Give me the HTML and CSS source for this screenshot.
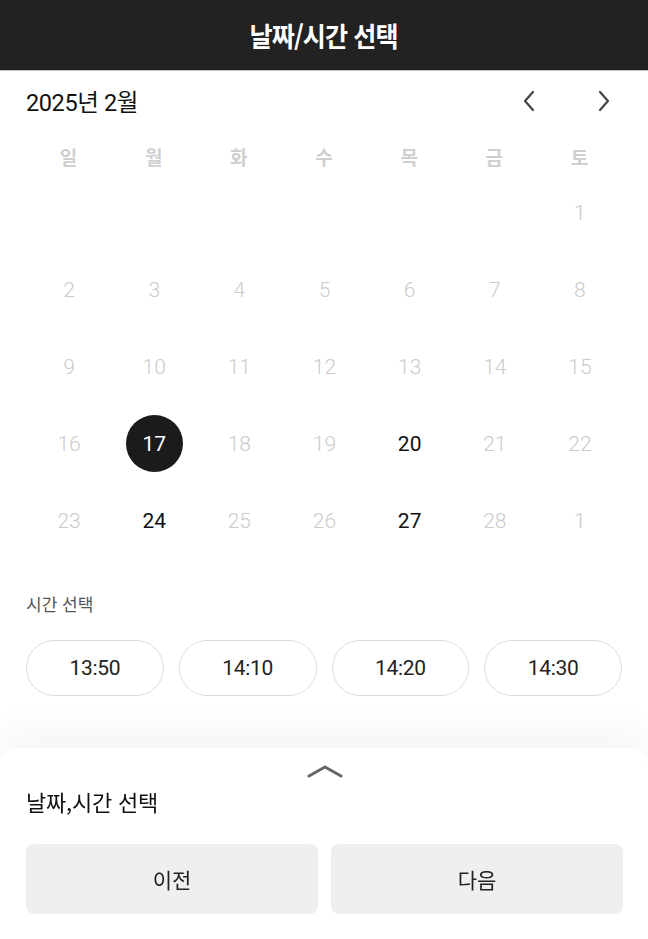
FILE: index.html
```html
<!DOCTYPE html>
<html lang="ko">
<head>
	<meta charset="utf-8">
	<meta name="viewport" content="width=device-width, initial-scale=1.0">
	<title>날짜/시간 선택</title>
	<link rel="stylesheet" href="styles.css">
</head>
<body>

	<header class="top-bar">
		<h1 class="top-title">날짜/시간 선택</h1>
	</header>

	<section class="calendar">
		<div class="month-row">
			<span class="month-label">2025년 2월</span>
			<div class="month-nav">
				<button class="nav-btn" type="button">
					<svg width="14" height="22" viewBox="0 0 14 22"><path d="M11 2 L3 11 L11 20" fill="none" stroke="#444" stroke-width="2.2" stroke-linecap="round" stroke-linejoin="round"/></svg>
				</button>
				<button class="nav-btn" type="button">
					<svg width="14" height="22" viewBox="0 0 14 22"><path d="M3 2 L11 11 L3 20" fill="none" stroke="#444" stroke-width="2.2" stroke-linecap="round" stroke-linejoin="round"/></svg>
				</button>
			</div>
		</div>

		<div class="week-row">
			<span>일</span><span>월</span><span>화</span><span>수</span><span>목</span><span>금</span><span>토</span>
		</div>

		<div class="days">
			<span class="day"></span><span class="day"></span><span class="day"></span><span class="day"></span><span class="day"></span><span class="day"></span><span class="day off">1</span>
			<span class="day off">2</span><span class="day off">3</span><span class="day off">4</span><span class="day off">5</span><span class="day off">6</span><span class="day off">7</span><span class="day off">8</span>
			<span class="day off">9</span><span class="day off">10</span><span class="day off">11</span><span class="day off">12</span><span class="day off">13</span><span class="day off">14</span><span class="day off">15</span>
			<span class="day off">16</span><span class="day selected"><i>17</i></span><span class="day off">18</span><span class="day off">19</span><span class="day">20</span><span class="day off">21</span><span class="day off">22</span>
			<span class="day off">23</span><span class="day">24</span><span class="day off">25</span><span class="day off">26</span><span class="day">27</span><span class="day off">28</span><span class="day off">1</span>
		</div>
	</section>

	<section class="time">
		<div class="time-label">시간 선택</div>
		<div class="time-list">
			<button class="time-btn" type="button">13:50</button>
			<button class="time-btn" type="button">14:10</button>
			<button class="time-btn" type="button">14:20</button>
			<button class="time-btn" type="button">14:30</button>
		</div>
	</section>

	<div class="sheet">
		<div class="sheet-handle">
			<svg width="40" height="14" viewBox="0 0 40 14"><path d="M4 12 L20 3 L36 12" fill="none" stroke="#666" stroke-width="3" stroke-linecap="round" stroke-linejoin="round"/></svg>
		</div>
		<div class="sheet-title">날짜,시간 선택</div>
		<div class="sheet-btns">
			<button class="sheet-btn" type="button">이전</button>
			<button class="sheet-btn" type="button">다음</button>
		</div>
	</div>

</body>
</html>
```

FILE: styles.css
```css
html { height:100%; }
body { margin:0; padding:0; height:100%; overflow:hidden; background:#fff; color:#111;
	font-family:Roboto, "Noto Sans CJK KR", sans-serif; }
button { font-family:inherit; border:0; background:none; padding:0; cursor:pointer; color:inherit; }

/* 상단 바 */
.top-bar {
	height:70px;
	background:#222222;
	border-bottom:1px solid #bdbdbd;
	display:flex;
	align-items:center;
	justify-content:center;
}
.top-title {
	margin:0;
	color:#fff;
	font-family:"Noto Sans CJK KR", sans-serif;
	font-size:27px;
	font-weight:700;
	letter-spacing:-1px;
	transform:scaleX(0.93);
	padding-top:1px;
}

/* 달력 */
.calendar { padding:0 26px; }
.month-row {
	height:59px;
	display:flex;
	align-items:center;
	justify-content:space-between;
}
.month-label {
	font-size:23.5px;
	letter-spacing:-0.4px;
	font-family:Roboto, "Noto Sans CJK KR", sans-serif;
}
.month-nav { display:flex; gap:61px; margin-right:11px; }
.nav-btn { width:14px; height:22px; display:flex; }

.week-row {
	margin-top:8px;
	height:36px;
	display:grid;
	grid-template-columns:repeat(7, 1fr);
	align-items:center;
	text-align:center;
	color:#cfcfcf;
	font-family:"Noto Sans CJK KR", sans-serif;
	font-weight:700;
	font-size:19px;
}

.days {
	display:grid;
	grid-template-columns:repeat(7, 1fr);
	grid-auto-rows:77px;
}
.day {
	display:flex;
	align-items:center;
	justify-content:center;
	font-size:21px;
	color:#111;
	padding-left:1px;
}
.day.off { color:#cbcbcb; font-weight:300; }
.day.selected i {
	font-style:normal;
	width:57px;
	height:57px;
	border-radius:50%;
	background:#1b1b1b;
	color:#fff;
	display:flex;
	align-items:center;
	justify-content:center;
}

/* 시간 선택 */
.time { padding:0 26px; }
.time-label {
	margin-top:33px;
	line-height:24px;
	font-size:17px;
	color:#555;
	font-family:"Noto Sans CJK KR", sans-serif;
}
.time-list {
	margin-top:24px;
	display:grid;
	grid-template-columns:repeat(4, 1fr);
	gap:15px;
}
.time-btn {
	height:56px;
	border:1px solid #dcdcdc;
	border-radius:28px;
	background:#fff;
	font-size:21px;
	letter-spacing:-0.3px;
	color:#222;
}

/* 하단 시트 */
.sheet {
	position:fixed;
	left:0;
	right:0;
	bottom:0;
	height:191px;
	background:#fff;
	border-radius:18px 18px 0 0;
	box-shadow:0 -18px 40px rgba(0,0,0,0.045);
	padding:0 25px 0 26px;
}
.sheet-handle {
	height:30px;
	display:flex;
	align-items:flex-end;
	justify-content:center;
}
.sheet-title {
	margin-top:9px;
	line-height:28px;
	font-size:22px;
	letter-spacing:-0.2px;
	font-family:"Noto Sans CJK KR", sans-serif;
	color:#111;
}
.sheet-btns {
	margin-top:29px;
	display:grid;
	grid-template-columns:1fr 1fr;
	gap:13px;
}
.sheet-btn {
	height:70px;
	border-radius:8px;
	background:#efefef;
	font-family:"Noto Sans CJK KR", sans-serif;
	font-size:21px;
	color:#222;
}
```
